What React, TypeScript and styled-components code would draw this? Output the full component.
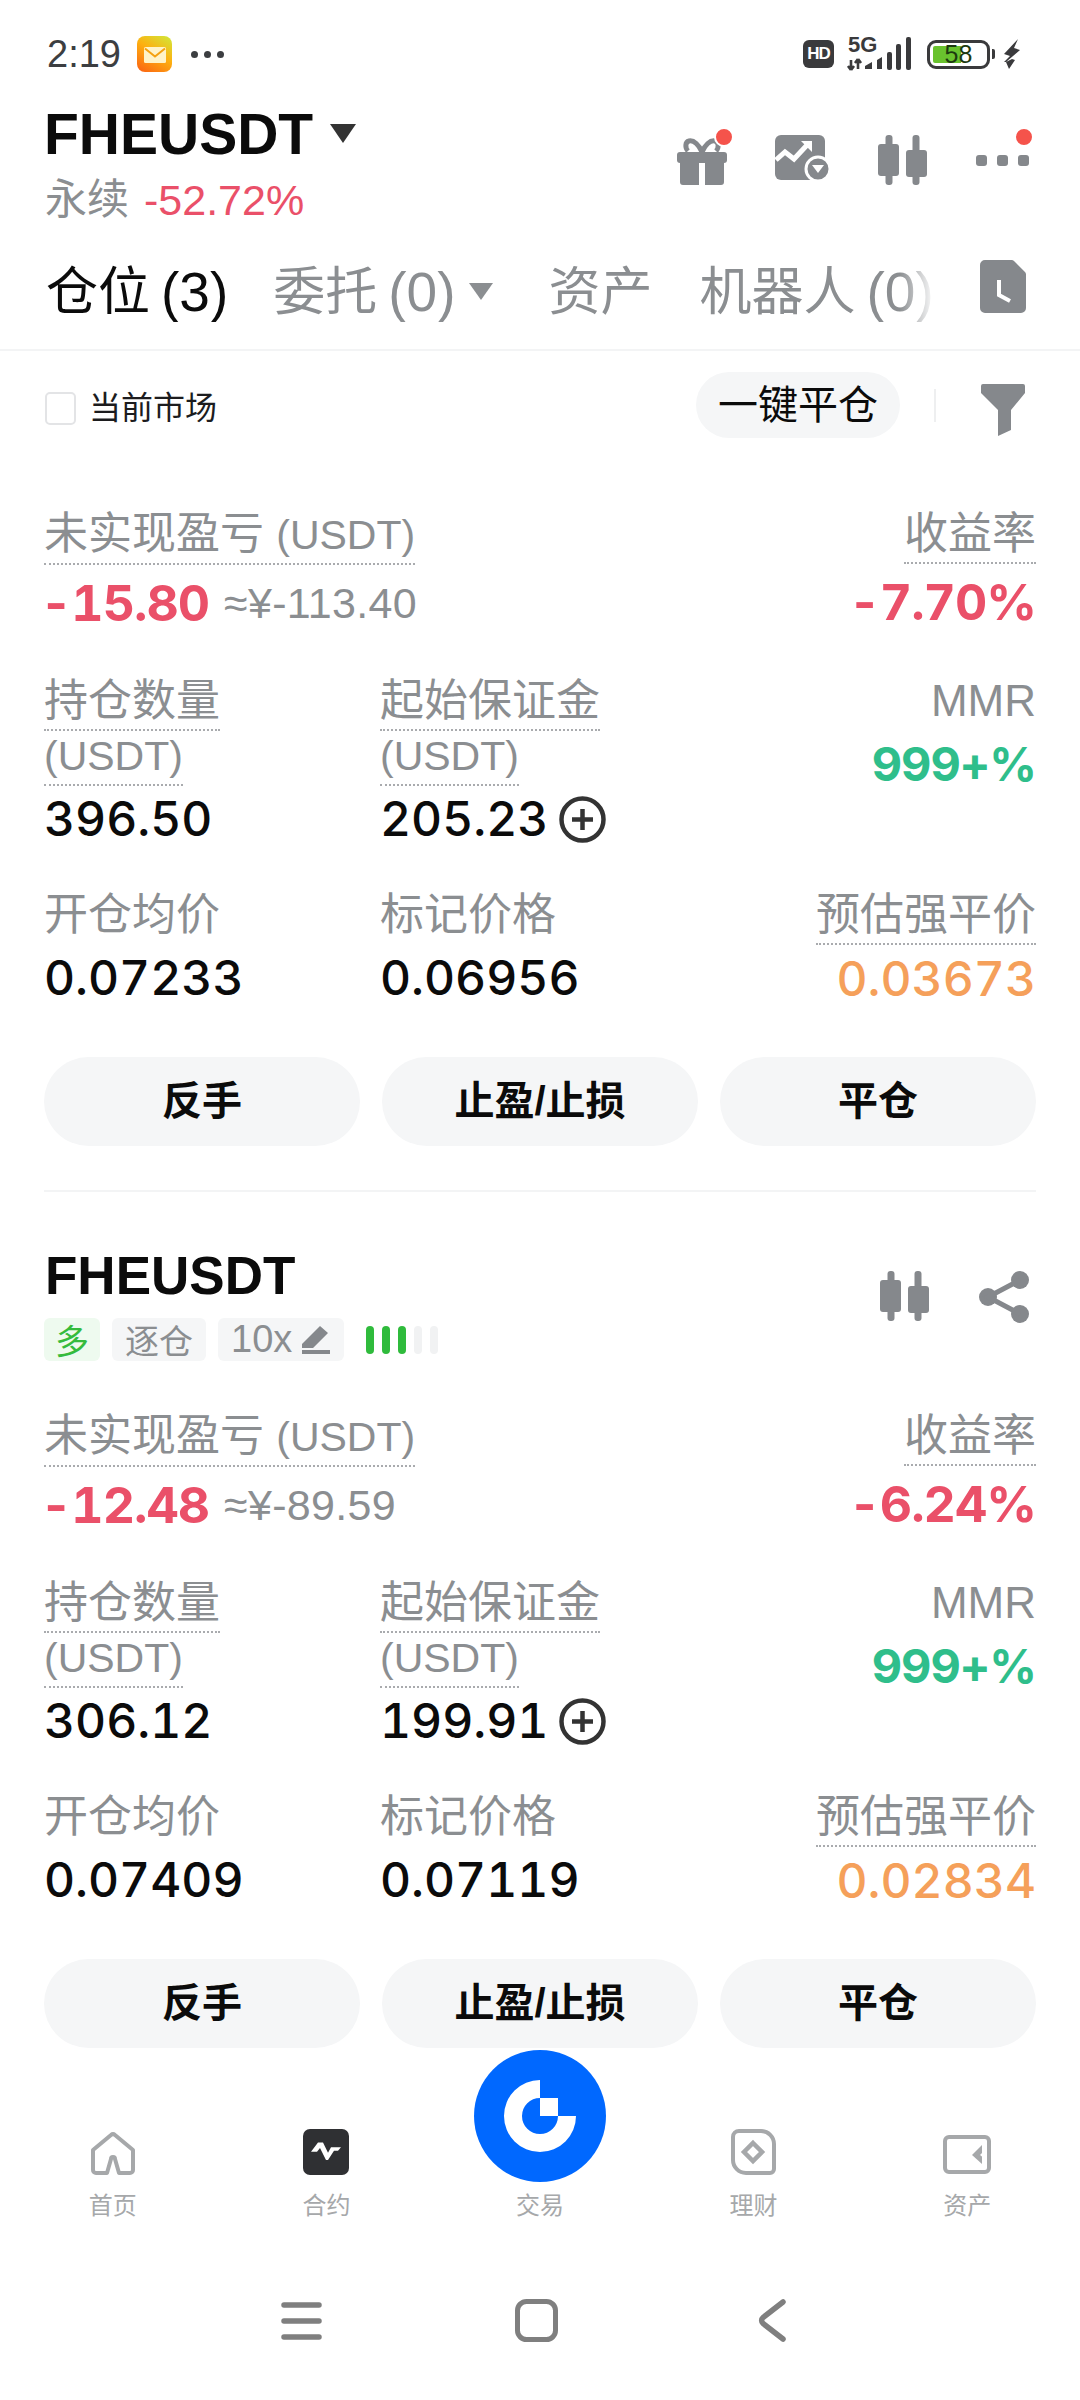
import React from 'react';
import styled, { createGlobalStyle } from 'styled-components';

const SANS = '"Liberation Sans", "Noto Sans CJK SC", sans-serif';
const NUM = 'Inter, "Liberation Sans", sans-serif';
const GRAY = '#8b8e91';
const ICON = '#85888c';
const RED = '#ea5069';

const GlobalStyle = createGlobalStyle`
  html, body { margin: 0; padding: 0; background: #fff; }
  body { font-family: ${SANS}; color: #0b0b0b; }
  * { box-sizing: border-box; }
`;

const Page = styled.div`
  width: 1080px;
  height: 2400px;
  overflow: hidden;
  background: #fff;
  display: flex;
  flex-direction: column;
`;

/* status bar */
const StatusBar = styled.div`
  height: 104px;
  padding: 36px 59px 0 47px;
  display: flex;
  align-items: flex-start;
`;

const Time = styled.div`
  font-size: 38px;
  line-height: 36px;
  color: #3c3e41;
  width: 90px;
`;

const MoreDots = styled.div`
  margin: 15px 0 0 19px;
  display: flex;
  gap: 6px;
  span { width: 7px; height: 7px; border-radius: 50%; background: #3c3e41; }
`;

const StatusRight = styled.div`
  margin-left: auto;
  display: flex;
  align-items: center;
  height: 36px;
`;

const HdBadge = styled.div`
  width: 31px;
  height: 28px;
  border-radius: 6px;
  background: #3a3a3c;
  color: #fff;
  font-size: 17px;
  font-weight: 700;
  line-height: 28px;
  text-align: center;
  letter-spacing: -1px;
`;

const NetWrap = styled.div`
  position: relative;
  width: 66px;
  height: 36px;
  margin-left: 12px;
`;

const NetLabel = styled.span`
  position: absolute;
  left: 2px;
  top: -1px;
  font-size: 22px;
  line-height: 20px;
  font-weight: 700;
  color: #3a3a3c;
`;

const Battery = styled.div`
  position: relative;
  width: 63px;
  height: 29px;
  margin-left: 15px;
  border: 3px solid #3a3a3c;
  border-radius: 9px;
  font-size: 25px;
  line-height: 23px;
  text-align: center;
  color: #1d3a10;
  overflow: hidden;
`;

const BatteryFill = styled.span`
  position: absolute;
  left: 3px;
  top: 3px;
  bottom: 3px;
  background: #69c22e;
  border-radius: 2px 0 0 2px;
`;

const BatteryText = styled.span`
  position: relative;
`;

const BatteryNub = styled.div`
  width: 3px;
  height: 10px;
  margin-left: 2px;
  background: #3a3a3c;
  border-radius: 0 2px 2px 0;
`;

/* market header */
const MarketHeader = styled.div`
  display: flex;
  justify-content: space-between;
  padding: 0 51px 0 44px;
`;

const SymbolRow = styled.div`
  display: flex;
  align-items: center;
  gap: 17px;
  height: 60px;
`;

const Symbol = styled.div<{ $size: number }>`
  font-size: ${({ $size }) => $size}px;
  line-height: 60px;
  font-weight: 700;
  color: #0b0b0b;
`;

const SubRow = styled.div`
  height: 58px;
  padding: 11px 0 0 1px;
  font-size: 42px;
  line-height: 50px;
  color: ${GRAY};
  display: flex;
  gap: 15px;
`;

const Change = styled.span`
  color: ${RED};
  font-size: 43px;
`;

const HeaderIcons = styled.div`
  display: flex;
  padding-top: 31px;
`;

const IconSlot = styled.div<{ $ml: number }>`
  margin-left: ${({ $ml }) => $ml}px;
  line-height: 0;
`;

/* tabs */
const TabBar = styled.div`
  height: 130px;
  padding: 40px 54px 0 46px;
  display: flex;
  align-items: flex-start;
  border-bottom: 2px solid #f3f4f5;
`;

const TabScroller = styled.div`
  width: 889px;
  display: flex;
  align-items: center;
  overflow: hidden;
  white-space: nowrap;
  mask-image: linear-gradient(to right, #000 96%, transparent 100%);
`;

const Tab = styled.div<{ $active?: boolean; $ml?: number }>`
  flex: none;
  display: flex;
  align-items: center;
  gap: 11px;
  margin-left: ${({ $ml }) => $ml || 0}px;
  font-size: 52px;
  line-height: 60px;
  color: ${({ $active }) => ($active ? '#0b0b0b' : GRAY)};
`;

// latin part of a mixed label is a touch off the CJK size in the app font
const Unit = styled.span<{ $size: number }>`
  font-size: ${({ $size }) => $size}px;
`;

const Caret = styled.span<{ $w: number; $h: number; $c: string; $ml: number }>`
  margin-left: ${({ $ml }) => $ml}px;
  width: 0;
  height: 0;
  border-left: ${({ $w }) => $w / 2}px solid transparent;
  border-right: ${({ $w }) => $w / 2}px solid transparent;
  border-top: ${({ $h }) => $h}px solid ${({ $c }) => $c};
`;

const DocSlot = styled.div`
  margin-left: auto;
  margin-top: -2px;
  line-height: 0;
`;

/* filter row */
const FilterRow = styled.div`
  height: 106px;
  padding: 21px 55px 0 45px;
  display: flex;
  align-items: flex-start;
`;

const CheckBox = styled.div`
  width: 31px;
  height: 33px;
  margin-top: 20px;
  border: 2px solid #e3e4e6;
  border-radius: 5px;
`;

const CheckLabel = styled.div`
  margin: 16px 0 0 13px;
  font-size: 32px;
  line-height: 40px;
  color: #1c1c1e;
`;

const CloseAll = styled.div`
  margin-left: auto;
  width: 204px;
  height: 66px;
  border-radius: 33px;
  background: #f5f6f7;
  font-size: 40px;
  line-height: 66px;
  text-align: center;
  color: #0b0b0b;
`;

const VDivider = styled.div`
  width: 2px;
  height: 33px;
  margin: 17px 45px 0 34px;
  background: #eeeff0;
`;

const FunnelSlot = styled.div`
  margin-top: 12px;
  line-height: 0;
`;

/* position card */
const PositionWrap = styled.section`
  margin-top: 54px;
  padding: 0 44px;
`;

const Separator = styled.div`
  height: 2px;
  margin: 44px 0 54px;
  background: #f3f4f5;
`;

const CardTitleRow = styled.div`
  display: flex;
  justify-content: space-between;
  align-items: flex-start;
  height: 52px;
  padding-left: 1px;
`;

const CardTools = styled.div`
  display: flex;
  gap: 50px;
  padding-right: 7px;
  margin-top: 25px;
  line-height: 0;
`;

const TagRow = styled.div`
  display: flex;
  align-items: center;
  gap: 12px;
  margin-top: 20px;
  height: 43px;
  margin-bottom: 51px;
`;

const Tag = styled.div<{ $long?: boolean }>`
  height: 43px;
  padding: 0 ${({ $long }) => ($long ? 11 : 13)}px;
  display: flex;
  align-items: center;
  gap: 10px;
  border-radius: 6px;
  font-size: 34px;
  background: ${({ $long }) => ($long ? '#eefaef' : '#f5f6f7')};
  color: ${({ $long }) => ($long ? '#35bb3d' : GRAY)};
`;

const AdlBars = styled.div`
  display: flex;
  gap: 8px;
  margin-left: 10px;
`;

const AdlBar = styled.span<{ $on: boolean }>`
  width: 8px;
  height: 28px;
  border-radius: 4px;
  background: ${({ $on }) => ($on ? '#2fbb3c' : '#f1f2f3')};
`;

const MetricsGrid = styled.div`
  display: grid;
  grid-template-columns: 336px 1fr auto;
`;

const Cell = styled.div<{ $span?: number; $right?: boolean; $mt?: number }>`
  grid-column: span ${({ $span }) => $span || 1};
  margin-top: ${({ $mt }) => $mt || 0}px;
  display: flex;
  flex-direction: column;
  align-items: ${({ $right }) => ($right ? 'flex-end' : 'flex-start')};
`;

const Label = styled.div<{ $plain?: boolean }>`
  font-size: 44px;
  line-height: 48px;
  padding-bottom: 4px;
  color: ${GRAY};
  white-space: nowrap;
  border-bottom: 2px dotted ${({ $plain }) => ($plain ? 'transparent' : '#a9abae')};
`;

const Value = styled.div<{ $color?: string; $bold?: boolean; $mt?: number; $size?: number }>`
  font-family: ${NUM};
  font-feature-settings: 'tnum';
  font-size: ${({ $size }) => $size || 48}px;
  line-height: 56px;
  letter-spacing: ${({ $bold }) => ($bold ? -1 : 0)}px;
  margin-top: ${({ $mt }) => $mt || 0}px;
  font-weight: ${({ $bold }) => ($bold ? 700 : 500)};
  color: ${({ $color }) => $color || '#0b0b0b'};
  display: flex;
  align-items: center;
`;

const Minus = styled.span`
  margin-left: -4px;
`;

const Approx = styled.span`
  font-family: ${SANS};
  font-size: 43px;
  font-weight: 400;
  letter-spacing: 0.3px;
  color: ${GRAY};
  margin-left: 15px;
`;

const PlusSlot = styled.span`
  margin-left: 11px;
  line-height: 0;
`;

const ActionRow = styled.div`
  display: grid;
  grid-template-columns: repeat(3, 316px);
  justify-content: space-between;
  margin-top: 50px;
`;

const ActionButton = styled.div`
  height: 89px;
  border-radius: 45px;
  background: #f5f6f7;
  font-size: 40px;
  font-weight: 700;
  line-height: 89px;
  text-align: center;
  color: #0b0b0b;
`;

/* bottom nav */
const BottomNav = styled.nav`
  height: 194px;
  padding: 0 6px;
  display: grid;
  grid-template-columns: repeat(5, 1fr);
  align-items: end;
`;

const NavItem = styled.div`
  display: flex;
  flex-direction: column;
  align-items: center;
  padding-bottom: 20px;
`;

const NavIcon = styled.div<{ $mb?: number }>`
  line-height: 0;
  margin-bottom: ${({ $mb }) => $mb || 0}px;
`;

const NavLabel = styled.div`
  margin-top: 16px;
  font-size: 24px;
  line-height: 30px;
  color: #a6a8aa;
`;

const SystemNav = styled.div`
  height: 160px;
  padding-left: 281px;
  display: flex;
  align-items: center;
  gap: 193px;
  line-height: 0;
`;

/* drawings */
const MailIcon = () => (
  <svg width="35" height="36" viewBox="0 0 35 36">
    <defs>
      <linearGradient id="mailBg" x1="0.8" y1="0" x2="0.2" y2="1">
        <stop offset="0" stopColor="#d7e034" />
        <stop offset="0.45" stopColor="#fdb010" />
        <stop offset="1" stopColor="#fb6a12" />
      </linearGradient>
    </defs>
    <rect width="35" height="36" rx="8" fill="url(#mailBg)" />
    <rect x="7" y="11" width="22" height="16" rx="1.5" fill="#fff3c8" />
    <path d="M8 12.5l10 8 10-8" fill="none" stroke="#f5a10f" strokeWidth="2" />
  </svg>
);

const SignalIcon = () => (
  <svg width="66" height="36" viewBox="0 0 66 36">
    <path d="M5 24v10M5 34l-3-4M5 34l3-4M12 33V23M12 23l-3 4M12 23l3 4" stroke="#3a3a3c" strokeWidth="2.6" fill="none" />
    <path d="M19 33v-3l7-4v7zM31 33v-9l5-3v12z" fill="#3a3a3c" />
    <rect x="41" y="16" width="5" height="18" rx="2" fill="#3a3a3c" />
    <rect x="50" y="8" width="5" height="26" rx="2" fill="#3a3a3c" />
    <rect x="60" y="1" width="5" height="33" rx="2" fill="#3a3a3c" />
  </svg>
);

const BoltIcon = () => (
  <svg width="18" height="30" viewBox="0 0 18 30" style={{ marginLeft: 8 }}>
    <path d="M15 0L1 15l6 2-6 6 2 0 14-12-6-2 4-9zM3 23l3 7 6-9-3-1z" fill="#3a3a3c" />
  </svg>
);

const GiftIcon = () => (
  <svg width="50" height="50" viewBox="0 0 50 50">
    <path d="M25 17c-3-7-8-12-13-11-4 1-4 7-1 10" fill="none" stroke={ICON} strokeWidth="5" />
    <path d="M25 17c3-7 8-12 13-11 4 1 4 7 1 10" fill="none" stroke={ICON} strokeWidth="5" />
    <rect y="17" width="50" height="11" rx="3" fill={ICON} />
    <path d="M3 26h19v24H6a3 3 0 0 1-3-3zM28 26h19v21a3 3 0 0 1-3 3H28z" fill={ICON} />
  </svg>
);

const ChartPickIcon = () => (
  <svg width="54" height="46" viewBox="0 0 54 46">
    <rect width="50" height="45" rx="6" fill={ICON} />
    <path d="M1 25l9-8 9 7 14-15" fill="none" stroke="#fff" strokeWidth="5" />
    <path d="M26 6h11v11z" fill="#fff" />
    <circle cx="43" cy="34" r="12" fill={ICON} stroke="#fff" strokeWidth="3" />
    <path d="M37 30h12l-6 8z" fill="#fff" />
  </svg>
);

const CandleIcon = () => (
  <svg width="49" height="50" viewBox="0 0 49 50">
    <rect x="7.5" width="7" height="50" rx="3" fill={ICON} />
    <rect y="9" width="21" height="32" rx="3" fill={ICON} />
    <rect x="34.5" width="7" height="50" rx="3" fill={ICON} />
    <rect x="28" y="15" width="21" height="27" rx="3" fill={ICON} />
  </svg>
);

const DotsIcon = () => (
  <svg width="53" height="11" viewBox="0 0 53 11" style={{ marginTop: 20 }}>
    <rect width="11" height="11" rx="3" fill={ICON} />
    <rect x="21" width="11" height="11" rx="3" fill={ICON} />
    <rect x="42" width="11" height="11" rx="3" fill={ICON} />
  </svg>
);

const RedDot = styled.span<{ $left: number }>`
  position: absolute;
  left: ${({ $left }) => $left}px;
  top: -8px;
  width: 16px;
  height: 16px;
  border-radius: 50%;
  background: #f5534b;
  border: 2px solid #fff;
  box-sizing: content-box;
`;

const DotHolder = styled.div`
  position: relative;
`;

const DocClockIcon = () => (
  <svg width="46" height="53" viewBox="0 0 46 53">
    <path d="M5 0h26a4 4 0 0 1 3 1l11 11a4 4 0 0 1 1 3v33a5 5 0 0 1-5 5H5a5 5 0 0 1-5-5V5a5 5 0 0 1 5-5z" fill={ICON} />
    <path d="M19 20v15l11 6" fill="none" stroke="#fff" strokeWidth="4" />
  </svg>
);

const FunnelIcon = () => (
  <svg width="44" height="52" viewBox="0 0 44 52">
    <path d="M2 0h40a2 2 0 0 1 2 2v7L30 26v20l-13 6V26L0 9V2a2 2 0 0 1 2-2z" fill={ICON} />
  </svg>
);

const PlusCircleIcon = () => (
  <svg width="47" height="47" viewBox="0 0 47 47">
    <circle cx="23.5" cy="23.5" r="21" fill="none" stroke="#333" strokeWidth="4.5" />
    <path d="M23.5 13v21M13 23.5h21" stroke="#333" strokeWidth="4.5" />
  </svg>
);

const PencilIcon = () => (
  <svg width="29" height="29" viewBox="0 0 29 29">
    <path d="M18 1l8 7-15 15H0v-4zM0 25h28v4H0z" fill={ICON} />
  </svg>
);

const ShareIcon = () => (
  <svg width="50" height="52" viewBox="0 0 50 52">
    <circle cx="41" cy="9" r="9" fill={ICON} />
    <circle cx="9" cy="26" r="9" fill={ICON} />
    <circle cx="41" cy="43" r="9" fill={ICON} />
    <path d="M41 9L9 26l32 17" fill="none" stroke={ICON} strokeWidth="5" />
  </svg>
);

const HomeIcon = () => (
  <svg width="44" height="43" viewBox="0 0 44 43">
    <path
      d="M2 18L20 3a3 3 0 0 1 4 0l18 15v20a3 3 0 0 1-3 3H28l-4-14a2 2 0 0 0-4 0l-4 14H5a3 3 0 0 1-3-3z"
      fill="none"
      stroke="#a6a8aa"
      strokeWidth="4"
      strokeLinejoin="round"
    />
  </svg>
);

const ContractIcon = () => (
  <svg width="46" height="46" viewBox="0 0 46 46">
    <rect width="46" height="46" rx="7" fill="#2f3033" />
    <path d="M8 28l7-10h5l5 11 3-6h10l-3 4h-4l-6 10h-2l-6-13-3 4z" fill="#fff" transform="translate(0 -3) scale(1 .92)" />
  </svg>
);

const GateLogo = () => (
  <svg width="132" height="132" viewBox="0 0 132 132">
    <circle cx="66" cy="66" r="66" fill="#0068ff" />
    <path d="M66 30a36 36 0 1 0 36 36H84a18 18 0 1 1-18-18z" fill="#fff" />
    <rect x="66" y="48" width="18" height="18" fill="#fff" />
  </svg>
);

const FinanceIcon = () => (
  <svg width="45" height="46" viewBox="0 0 45 46">
    <path d="M8 2h22a13 13 0 0 1 13 13v25a4 4 0 0 1-4 4H15A13 13 0 0 1 2 31V8a6 6 0 0 1 6-6z" fill="none" stroke="#a6a8aa" strokeWidth="4" />
    <path d="M22 14l9 9-9 9-9-9z" fill="none" stroke="#a6a8aa" strokeWidth="4.5" />
  </svg>
);

const AssetsIcon = () => (
  <svg width="48" height="39" viewBox="0 0 48 39" style={{ marginBottom: 1 }}>
    <rect x="2" y="2" width="44" height="35" rx="4" fill="none" stroke="#a6a8aa" strokeWidth="4" />
    <path d="M39 10v19l-10-9z" fill="#a6a8aa" />
    <path d="M39 15v9l-5-4z" fill="#fff" transform="translate(3 0)" />
  </svg>
);

const MenuIcon = () => (
  <svg width="41" height="38" viewBox="0 0 41 38">
    <path d="M3 3h35M3 19h35M3 35h35" stroke="#7f7f7f" strokeWidth="5.5" strokeLinecap="round" />
  </svg>
);

const SquareIcon = () => (
  <svg width="43" height="43" viewBox="0 0 43 43">
    <rect x="2.5" y="2.5" width="38" height="38" rx="9" fill="none" stroke="#7f7f7f" strokeWidth="5" />
  </svg>
);

const BackIcon = () => (
  <svg width="35" height="43" viewBox="0 0 35 43">
    <path d="M32 3L12 18.5a4 4 0 0 0 0 6L32 40" fill="none" stroke="#7f7f7f" strokeWidth="5.5" strokeLinecap="round" />
  </svg>
);

interface Position {
  pnl: string;
  cny: string;
  roe: string;
  size: string;
  margin: string;
  entry: string;
  mark: string;
  liq: string;
}

const positions: Position[] = [
  { pnl: '-15.80', cny: '≈¥-113.40', roe: '-7.70%', size: '396.50', margin: '205.23', entry: '0.07233', mark: '0.06956', liq: '0.03673' },
  { pnl: '-12.48', cny: '≈¥-89.59', roe: '-6.24%', size: '306.12', margin: '199.91', entry: '0.07409', mark: '0.07119', liq: '0.02834' },
];

const PositionMetrics = ({ p }: { p: Position }) => (
  <>
    <MetricsGrid>
      <Cell $span={2}>
        <Label>未实现盈亏 <Unit $size={41}>(USDT)</Unit></Label>
        <Value $color={RED} $bold $mt={10} $size={50}>
          <Minus>{p.pnl}</Minus>
          <Approx>{p.cny}</Approx>
        </Value>
      </Cell>
      <Cell $right>
        <Label>收益率</Label>
        <Value $color={RED} $bold $mt={10} $size={50}>{p.roe}</Value>
      </Cell>

      <Cell $mt={46}>
        <Label>持仓数量</Label>
        <Label><Unit $size={41}>(USDT)</Unit></Label>
        <Value $mt={5}>{p.size}</Value>
      </Cell>
      <Cell $mt={46}>
        <Label>起始保证金</Label>
        <Label><Unit $size={41}>(USDT)</Unit></Label>
        <Value $mt={5}>
          {p.margin}
          <PlusSlot><PlusCircleIcon /></PlusSlot>
        </Value>
      </Cell>
      <Cell $right $mt={46}>
        <Label $plain>MMR</Label>
        <Value $color="#2fbe8b" $bold $mt={5} $size={47}>999+%</Value>
      </Cell>

      <Cell $mt={44}>
        <Label $plain>开仓均价</Label>
        <Value $mt={5}>{p.entry}</Value>
      </Cell>
      <Cell $mt={44}>
        <Label $plain>标记价格</Label>
        <Value $mt={5}>{p.mark}</Value>
      </Cell>
      <Cell $right $mt={44}>
        <Label>预估强平价</Label>
        <Value $color="#f5a05a" $mt={6}>{p.liq}</Value>
      </Cell>
    </MetricsGrid>
    <ActionRow>
      <ActionButton>反手</ActionButton>
      <ActionButton>止盈/止损</ActionButton>
      <ActionButton>平仓</ActionButton>
    </ActionRow>
  </>
);

const App = () => (
  <Page>
    <GlobalStyle />
    <StatusBar>
      <Time>2:19</Time>
      <MailIcon />
      <MoreDots><span /><span /><span /></MoreDots>
      <StatusRight>
        <HdBadge>HD</HdBadge>
        <NetWrap>
          <NetLabel>5G</NetLabel>
          <SignalIcon />
        </NetWrap>
        <Battery>
          <BatteryFill style={{ width: 28 }} />
          <BatteryText>58</BatteryText>
        </Battery>
        <BatteryNub />
        <BoltIcon />
      </StatusRight>
    </StatusBar>

    <MarketHeader>
      <div>
        <SymbolRow>
          <Symbol $size={57}>FHEUSDT</Symbol>
          <Caret $w={27} $h={19} $c="#333" $ml={0} />
        </SymbolRow>
        <SubRow>
          永续 <Change>-52.72%</Change>
        </SubRow>
      </div>
      <HeaderIcons>
        <IconSlot $ml={0}>
          <DotHolder>
            <GiftIcon />
            <RedDot $left={37} />
          </DotHolder>
        </IconSlot>
        <IconSlot $ml={48}><ChartPickIcon /></IconSlot>
        <IconSlot $ml={49}><CandleIcon /></IconSlot>
        <IconSlot $ml={49}>
          <DotHolder>
            <DotsIcon />
            <RedDot $left={38} />
          </DotHolder>
        </IconSlot>
      </HeaderIcons>
    </MarketHeader>

    <TabBar>
      <TabScroller>
        <Tab $active>仓位 <Unit $size={55}>(3)</Unit></Tab>
        <Tab $ml={45}>
          委托 <Unit $size={55}>(0)</Unit>
          <Caret $w={24} $h={17} $c={GRAY} $ml={2} />
        </Tab>
        <Tab $ml={56}>资产</Tab>
        <Tab $ml={47}>机器人 <Unit $size={55}>(0)</Unit></Tab>
      </TabScroller>
      <DocSlot><DocClockIcon /></DocSlot>
    </TabBar>

    <FilterRow>
      <CheckBox />
      <CheckLabel>当前市场</CheckLabel>
      <CloseAll>一键平仓</CloseAll>
      <VDivider />
      <FunnelSlot><FunnelIcon /></FunnelSlot>
    </FilterRow>

    <PositionWrap>
      <PositionMetrics p={positions[0]} />
      <Separator />
      <CardTitleRow>
        <Symbol $size={53}>FHEUSDT</Symbol>
        <CardTools>
          <CandleIcon />
          <ShareIcon />
        </CardTools>
      </CardTitleRow>
      <TagRow>
        <Tag $long>多</Tag>
        <Tag>逐仓</Tag>
        <Tag><Unit $size={38}>10x</Unit><PencilIcon /></Tag>
        <AdlBars>
          {[true, true, true, false, false].map((on, i) => (
            <AdlBar key={i} $on={on} />
          ))}
        </AdlBars>
      </TagRow>
      <PositionMetrics p={positions[1]} />
    </PositionWrap>

    <BottomNav>
      <NavItem><NavIcon><HomeIcon /></NavIcon><NavLabel>首页</NavLabel></NavItem>
      <NavItem><NavIcon><ContractIcon /></NavIcon><NavLabel>合约</NavLabel></NavItem>
      <NavItem><NavIcon $mb={-7}><GateLogo /></NavIcon><NavLabel>交易</NavLabel></NavItem>
      <NavItem><NavIcon><FinanceIcon /></NavIcon><NavLabel>理财</NavLabel></NavItem>
      <NavItem><NavIcon><AssetsIcon /></NavIcon><NavLabel>资产</NavLabel></NavItem>
    </BottomNav>

    <SystemNav>
      <MenuIcon />
      <SquareIcon />
      <BackIcon />
    </SystemNav>
  </Page>
);

export default App;
